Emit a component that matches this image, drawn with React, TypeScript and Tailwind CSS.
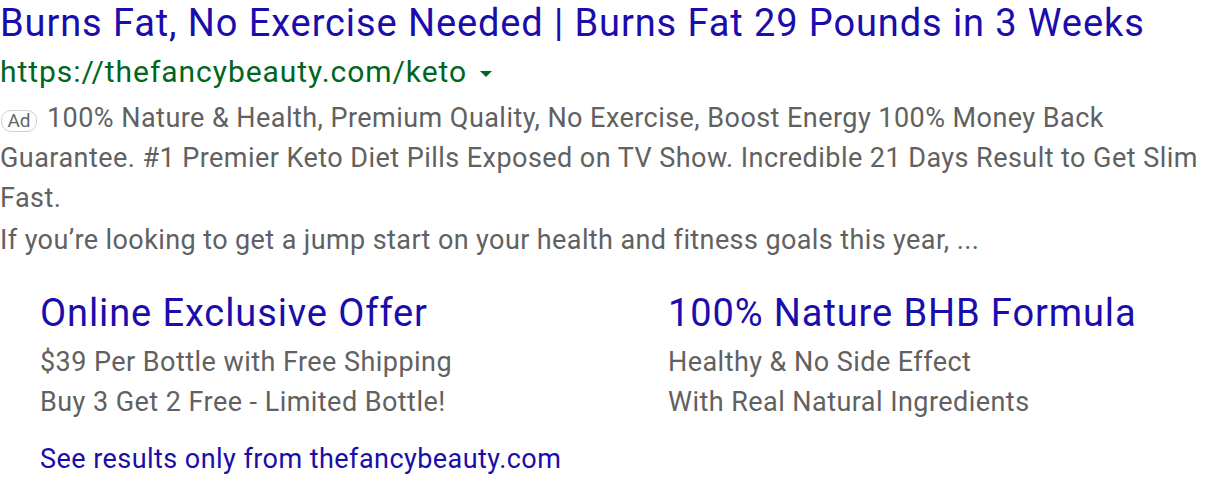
import React from 'react';

const sitelinks = [
  {
    title: 'Online Exclusive Offer',
    lines: ['$39 Per Bottle with Free Shipping', 'Buy 3 Get 2 Free - Limited Bottle!'],
  },
  {
    title: '100% Nature BHB Formula',
    lines: ['Healthy & No Side Effect', 'With Real Natural Ingredients'],
  },
];

const App = () => {
  return (
    <div className="w-[1216px] h-[482px] bg-white overflow-hidden font-['Roboto',sans-serif]">
      <div className="text-[38px] leading-[46px] tracking-[0.9px] text-[#1a0dab] whitespace-nowrap">
        Burns Fat, No Exercise Needed | Burns Fat 29 Pounds in 3 Weeks
      </div>
      <div className="flex items-center h-[52px] text-[30px] leading-[52px] tracking-[0.95px] text-[#006621]">
        <span>https://thefancybeauty.com/keto</span>
        <svg className="ml-[13px] mt-[4px]" width="12" height="6" viewBox="0 0 12 6">
          <path d="M0 0h12L6 6z" fill="#006621" />
        </svg>
      </div>
      <p className="text-[27px] leading-[40px] tracking-[0.45px] text-[#616161] pr-[8px]">
        <span className="inline-flex items-center justify-center w-[36px] h-[22px] text-[19px] leading-none tracking-normal text-[#666] border border-[#cfcfcf] rounded-[10px] ml-[1px] mr-[10px] align-[0px]">
          Ad
        </span>
        100% Nature &amp; Health, Premium Quality, No Exercise, Boost Energy 100% Money Back Guarantee. #1
        Premier Keto Diet Pills Exposed on TV Show. Incredible 21 Days Result to Get Slim Fast.
      </p>
      <p className="mt-[2px] text-[27px] leading-[40px] tracking-[0.4px] text-[#616161] whitespace-nowrap">
        If you’re looking to get a jump start on your health and fitness goals this year, ...
      </p>
      <div className="grid grid-cols-[628px_1fr] pl-[40px] mt-[29px]">
        {sitelinks.map((s) => (
          <div key={s.title}>
            <div className="text-[38px] leading-[48px] tracking-[0.9px] text-[#1a0dab] whitespace-nowrap">
              {s.title}
            </div>
            <div className="mt-[5px]">
              {s.lines.map((l) => (
                <div key={l} className="text-[27px] leading-[40px] tracking-[0.45px] text-[#616161] whitespace-nowrap">
                  {l}
                </div>
              ))}
            </div>
          </div>
        ))}
      </div>
      <div className="pl-[40px] mt-[17px] text-[27px] leading-[40px] tracking-[0.45px] text-[#1a0dab] whitespace-nowrap">
        See results only from thefancybeauty.com
      </div>
    </div>
  );
};

export default App;
